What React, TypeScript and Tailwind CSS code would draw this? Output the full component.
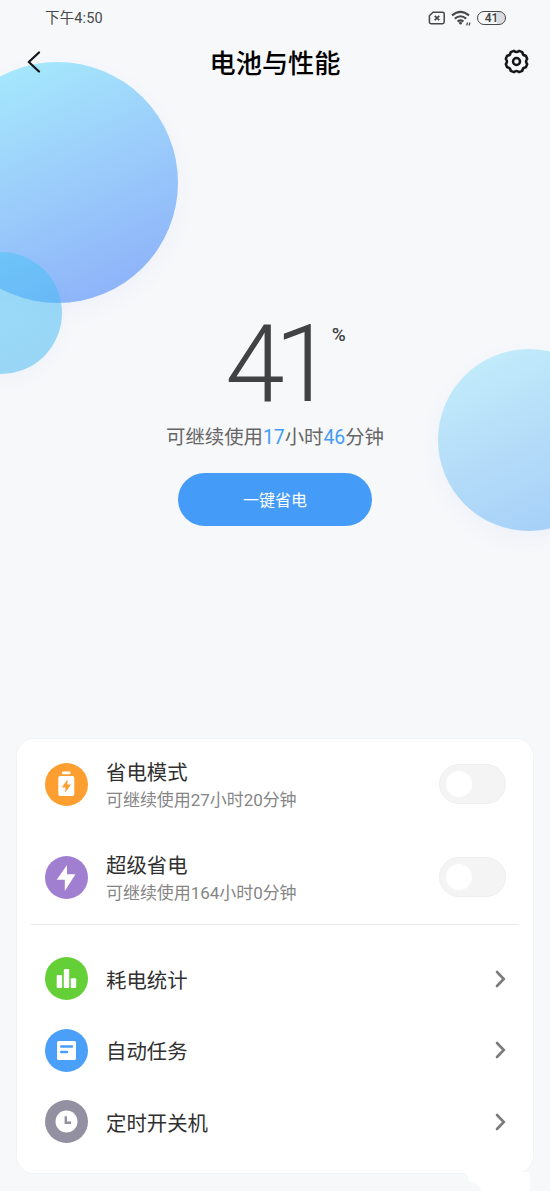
import type { ReactNode } from 'react'

const ChevronRight = () => (
  <svg className="mr-[1px] h-[18px] w-[12px]" viewBox="0 0 12 18" fill="none" stroke="#7b7b7b" strokeWidth="2.6" strokeLinecap="round" strokeLinejoin="miter">
    <path d="M2 2 L8.8 9 L2 16" />
  </svg>
)

function Toggle() {
  return (
    <button className="flex h-10 w-[67px] items-center rounded-full border border-[#efefef] bg-[#f4f4f4] pl-[6px]">
      <span className="h-[26px] w-[26px] rounded-full bg-white" />
    </button>
  )
}

function Bubbles() {
  return (
    <div className="absolute inset-0 overflow-hidden">
      <div className="absolute -left-[63px] top-[62px] h-[241px] w-[241px] rounded-full bg-[linear-gradient(155deg,#a6eafc_8%,#9bcdfb_50%,#8cb0f9_94%)] shadow-[0_8px_20px_rgba(120,140,230,0.06)]" />
      <div className="absolute -left-[60px] top-[252px] h-[122px] w-[122px] rounded-full bg-[linear-gradient(155deg,rgba(74,200,248,0.52),rgba(60,176,240,0.5))] shadow-[0_6px_16px_rgba(120,140,230,0.05)]" />
      <div className="absolute left-[438px] top-[349px] h-[182px] w-[182px] rounded-full bg-[linear-gradient(155deg,#c2edfb_8%,#b7dff9_42%,#a5cff8_90%)] shadow-[0_8px_20px_rgba(120,140,230,0.06)]" />
    </div>
  )
}

function StatusBar() {
  return (
    <div className="flex h-9 items-center justify-between pl-[45px] pr-[44px] text-[#48484a]">
      <span className="pt-[3px] text-[14.5px] leading-none tracking-[0.15px]">下午4:50</span>
      <div className="flex items-center">
        <svg className="mr-[5px] h-[14px] w-[18px]" viewBox="0 0 18 14" fill="none" stroke="#48484a" strokeWidth="1.5" strokeLinejoin="round">
          <path d="M5 1.2H14.5Q16.2 1.2 16.2 2.8V11Q16.2 12.7 14.5 12.7H3Q1.4 12.7 1.4 11V4.8Z" />
          <path d="M6.7 4.8 L11.3 9.2 M11.3 4.8 L6.7 9.2" strokeWidth="1.7" />
        </svg>
        <svg className="mr-[6px] h-[16px] w-[20px]" viewBox="0 0 20 16" fill="none" stroke="#48484a" strokeWidth="2.1">
          <path d="M1 5.4Q9.5 -1.8 18 5.4" />
          <path d="M3.8 8.6Q9.5 3.9 15.2 8.6" />
          <path d="M6.6 11.6Q9.5 9.2 12.4 11.6" />
          <circle cx="9.5" cy="13.2" r="1.4" fill="#48484a" stroke="none" />
          <path d="M15.6 15.5 L16.6 12.5 M18 15.5 L19 12.5" strokeWidth="1.2" />
        </svg>
        <div className="flex h-[14px] w-[29px] items-center justify-center rounded-full border-[1.5px] border-[#48484a] bg-[linear-gradient(90deg,transparent_72%,#dcdcde_72%)] text-[12px] font-semibold leading-none">
          41
        </div>
      </div>
    </div>
  )
}

function Header() {
  return (
    <header className="flex h-[51px] items-center justify-between pl-[26px] pr-5 text-black">
      <svg className="h-6 w-[27px]" viewBox="0 0 27 24" fill="none" stroke="#161616" strokeWidth="2.3" strokeLinecap="round" strokeLinejoin="round">
        <path d="M13 2.5 L2.8 12 L13 21.5" />
      </svg>
      <h1 className="mr-[6px] pt-[5px] text-[26.2px] font-medium leading-none">电池与性能</h1>
      <svg className="h-[27px] w-[27px]" viewBox="0 0 27 27" fill="none" stroke="#161616" strokeWidth="2.5" strokeLinejoin="round">
        <path d="M11 2.8 Q13.5 5.1 16 2.8 L19.3 4.1 Q19.5 7.5 22.9 7.7 L24.2 11 Q21.9 13.5 24.2 16 L22.9 19.3 Q19.5 19.5 19.3 22.9 L16 24.2 Q13.5 21.9 11 24.2 L7.7 22.9 Q7.5 19.5 4.1 19.3 L2.8 16 Q5.1 13.5 2.8 11 L4.1 7.7 Q7.5 7.5 7.7 4.1 Z" />
        <circle cx="13.5" cy="13.5" r="3.5" />
      </svg>
    </header>
  )
}

function Row({ color, icon, title, desc, className, children }: { color: string; icon: ReactNode; title: string; desc?: string; className: string; children: ReactNode }) {
  return (
    <div className={`flex items-center ${className}`}>
      <div className={`mr-[18px] flex h-[43px] w-[43px] shrink-0 items-center justify-center rounded-full ${color}`}>
        <svg className="h-[43px] w-[43px]" viewBox="0 0 43 43" fill="white">{icon}</svg>
      </div>
      <div className="flex-1 pt-[4px]">
        <div className="text-[20.4px] leading-[28px] text-[#303030]">{title}</div>
        {desc && <div className="text-[17px] leading-[26px] tracking-[-0.05px] text-[#858585]">{desc}</div>}
      </div>
      {children}
    </div>
  )
}

const links = [
  {
    title: '耗电统计',
    color: 'bg-[#65cf37]',
    icon: (
      <>
        <rect x="11.7" y="18" width="5.4" height="13" rx="1" />
        <rect x="18.8" y="12" width="5.4" height="19" rx="1" />
        <rect x="25.8" y="21.3" width="5.4" height="9.7" rx="1" />
      </>
    ),
  },
  {
    title: '自动任务',
    color: 'bg-[#4a9ff8]',
    icon: (
      <>
        <rect x="12" y="12" width="19" height="19" rx="1.6" />
        <path d="M16.2 17.5H27M16.2 23H22" stroke="#4a9ff8" strokeWidth="2.4" strokeLinecap="round" />
      </>
    ),
  },
  {
    title: '定时开关机',
    color: 'bg-[#9290a1]',
    icon: (
      <>
        <circle cx="21.5" cy="21.5" r="11" />
        <path d="M20.8 16.3V22.8H26" fill="none" stroke="#9290a1" strokeWidth="2.4" />
      </>
    ),
  },
]

export default function App() {
  return (
    <div className="relative h-[1191px] w-[550px] overflow-hidden bg-[#f6f8fa] font-['Roboto','Noto_Sans_CJK_SC',sans-serif]">
      <Bubbles />
      <div className="relative flex h-full flex-col">
        <StatusBar />
        <Header />

        {/* Battery level */}
        <section className="flex h-[651px] flex-col items-center pt-[225px]">
          <div className="flex h-[106px] items-start pl-[21px] text-[#414244]">
            <span className="text-[107px] font-light leading-[106px] tracking-[-10px]">41</span>
            <span className="ml-[8px] pt-[11px] text-[19px] font-medium leading-[24px]">%</span>
          </div>
          <p className="text-[19.4px] leading-[40px] tracking-[-0.03px] text-[#666]">
            可继续使用<span className="text-[#449bf7]">17</span>小时<span className="text-[#449bf7]">46</span>分钟
          </p>
          <button className="mt-[15px] h-[53px] w-[194px] rounded-full bg-[#459bf8] pt-[3px] text-[16px] text-white">
            一键省电
          </button>
        </section>

        <main className="mx-4 h-[436px] rounded-[18px] border border-[#f1f2f4] bg-white">
          <Row
            className="h-[90px] pl-7 pr-[27px]"
            color="bg-[#fd9f30]"
            title="省电模式"
            desc="可继续使用27小时20分钟"
            icon={
              <>
                <rect x="17" y="8.5" width="8.5" height="2.8" rx="1" />
                <rect x="13.3" y="13" width="16" height="20" rx="2" />
                <path d="M22.6 16.3 L16.8 24.4 H20.6 L20.2 29.7 L26 21.6 H22.2 Z" fill="#fd9f30" />
              </>
            }
          >
            <Toggle />
          </Row>
          <Row
            className="h-[96px] pl-7 pr-[27px]"
            color="bg-[#a07fd0]"
            title="超级省电"
            desc="可继续使用164小时0分钟"
            icon={<path d="M22 9 L11.7 23.7 H19.8 V35 L30.5 18.3 H22 Z" />}
          >
            <Toggle />
          </Row>
          <div className="mx-[14px] -mt-px h-px bg-[#e8e8e8]" />
          <div className="pt-[18px]">
            {links.map((item) => (
              <Row key={item.title} className="h-[71.5px] pl-7 pr-[25px]" color={item.color} title={item.title} icon={item.icon}>
                <ChevronRight />
              </Row>
            ))}
          </div>
        </main>
        <svg className="absolute bottom-0 left-[464px] h-[20px] w-[66px]" viewBox="0 0 66 20" fill="white">
          <path d="M0 1H66V20H18Q16 14 9 12Q3 10 4 5Z" />
        </svg>
      </div>
    </div>
  )
}
